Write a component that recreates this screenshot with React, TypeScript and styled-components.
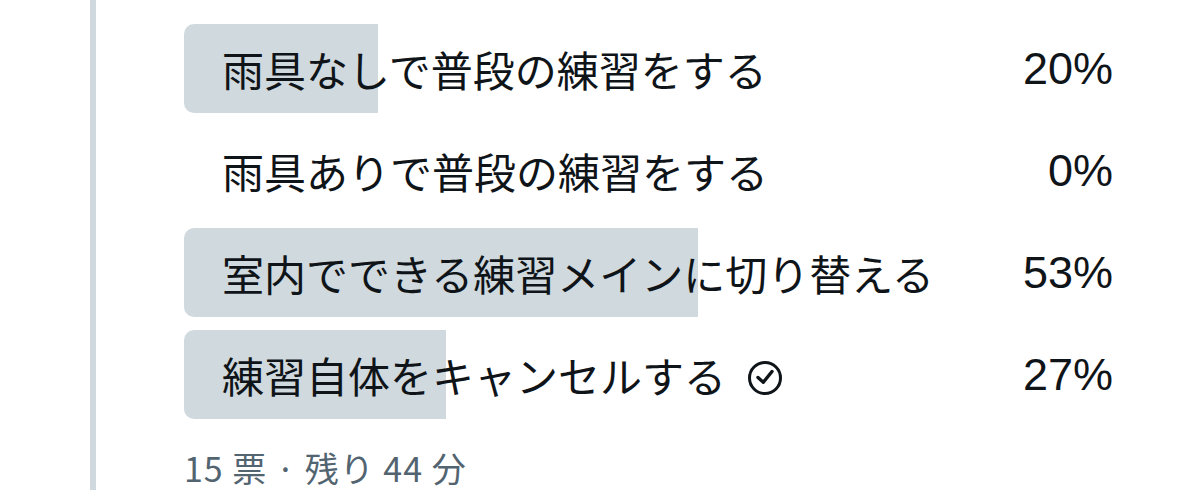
import React from "react";
import styled, { createGlobalStyle } from "styled-components";

const GlobalStyle = createGlobalStyle`
  html, body {
    margin: 0;
    padding: 0;
    background: #ffffff;
  }
  body {
    font-family: "Noto Sans CJK JP", "Noto Sans", sans-serif;
    color: #0f1419;
  }
`;

const Page = styled.div`
  display: flex;
  height: 490px;
  width: 1179px;
  overflow: hidden;
  padding-left: 90px;
  box-sizing: border-box;
`;

const ThreadLine = styled.div`
  width: 6px;
  flex: none;
  align-self: stretch;
  background: #cfd9de;
`;

const Poll = styled.div`
  display: flex;
  flex-direction: column;
  width: 970px;
  margin-left: 88px;
  padding-top: 24px;
`;

const Options = styled.div`
  display: flex;
  flex-direction: column;
  gap: 13px;
`;

const OptionRow = styled.div`
  position: relative;
  display: flex;
  align-items: center;
  justify-content: space-between;
  height: 89px;
  padding: 0 41px 0 38px;
`;

const Fill = styled.div`
  position: absolute;
  left: 0;
  top: 0;
  bottom: 0;
  background: #cfd9de;
  border-radius: 10px 0 0 10px;
`;

const Label = styled.span`
  position: relative;
  display: flex;
  align-items: center;
  gap: 21px;
  font-family: "Noto Sans CJK JP", sans-serif;
  font-size: 42px;
  line-height: 1;
  color: #0f1419;
  white-space: nowrap;
`;

const Percent = styled.span`
  position: relative;
  font-family: "Liberation Sans", Arial, sans-serif;
  font-size: 45px;
  line-height: 1;
  color: #0f1419;
`;

const CheckIcon = styled.svg`
  width: 36px;
  height: 36px;
  flex: none;
  margin-top: 6px;
`;

const Footer = styled.div`
  margin-top: 32px;
  font-family: "Noto Sans CJK JP", sans-serif;
  font-size: 34px;
  letter-spacing: 1px;
  line-height: 34px;
  color: #536471;
  white-space: pre;
`;

type Option = { label: string; pct: number; chosen?: boolean };

const options: Option[] = [
  { label: "雨具なしで普段の練習をする", pct: 20 },
  { label: "雨具ありで普段の練習をする", pct: 0 },
  { label: "室内でできる練習メインに切り替える", pct: 53 },
  { label: "練習自体をキャンセルする", pct: 27, chosen: true },
];

export default function App() {
  return (
    <>
      <GlobalStyle />
      <Page>
        <ThreadLine />
        <Poll>
          <Options>
            {options.map((o) => (
              <OptionRow key={o.label}>
                {o.pct > 0 && <Fill style={{ width: `${o.pct}%` }} />}
                <Label>
                  {o.label}
                  {o.chosen && (
                    <CheckIcon viewBox="0 0 36 36" aria-hidden="true">
                      <circle cx="18" cy="18" r="15.5" fill="none" stroke="#0f1419" strokeWidth="3" />
                      <path
                        d="M11 17.5 L16.3 22.3 L25 11.5"
                        fill="none"
                        stroke="#0f1419"
                        strokeWidth="3.4"
                        strokeLinecap="round"
                        strokeLinejoin="round"
                      />
                    </CheckIcon>
                  )}
                </Label>
                <Percent>{o.pct}%</Percent>
              </OptionRow>
            ))}
          </Options>
          <Footer>{"15 票 · 残り 44 分"}</Footer>
        </Poll>
      </Page>
    </>
  );
}
